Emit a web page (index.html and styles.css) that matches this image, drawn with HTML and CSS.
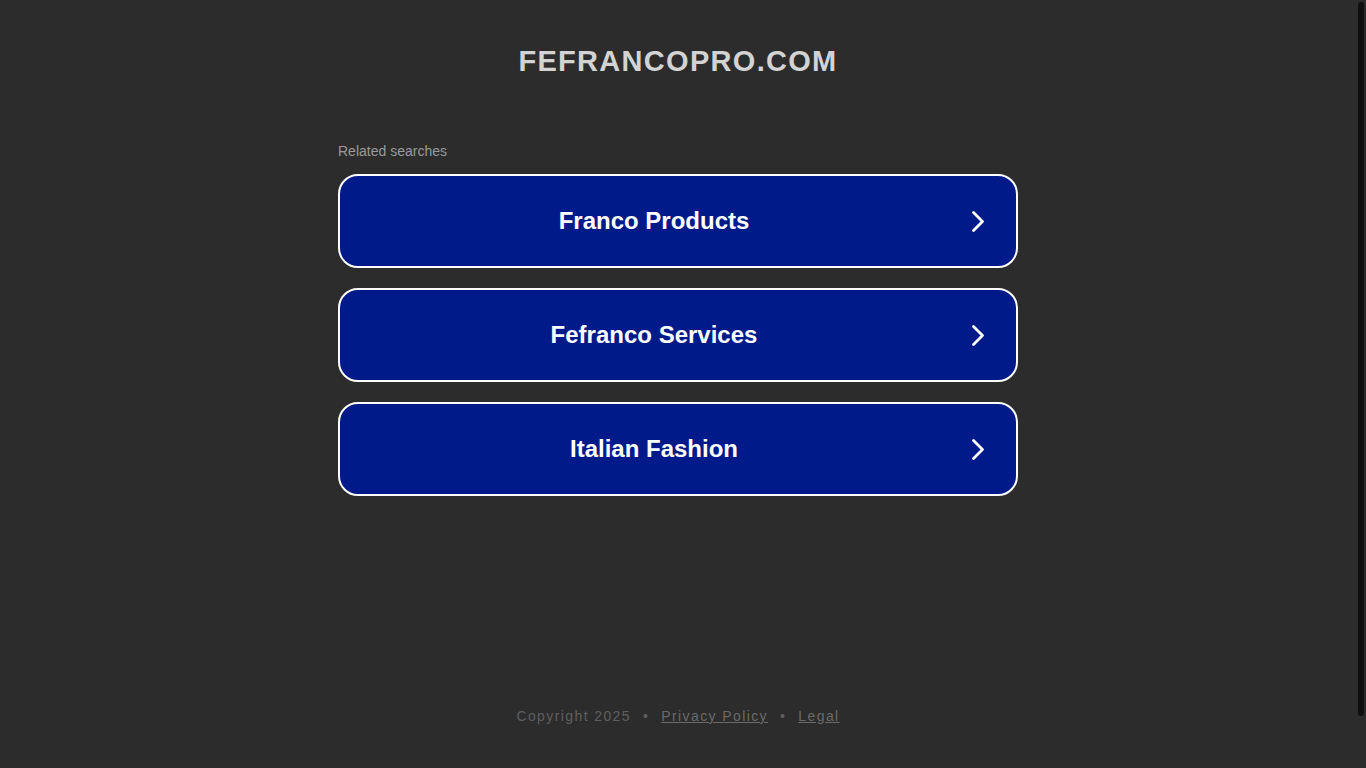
FILE: index.html
```html
<!DOCTYPE html>
<html lang="en">
<head>
<meta charset="utf-8">
<title>fefrancopro.com</title>
<link rel="stylesheet" href="styles.css">
</head>
<body>
<div class="page">
  <header class="header">
    <h1 class="domain">FEFRANCOPRO.COM</h1>
  </header>
  <main class="content">
    <div class="related">Related searches</div>
    <a class="result" href="#"><span class="label">Franco Products</span><span class="chev"><svg width="20" height="24" viewBox="0 0 20 24"><path d="M5.5 2.5 L14.5 11.5 L5.5 20.5" fill="none" stroke="#fff" stroke-width="2.8" stroke-linecap="round" stroke-linejoin="round"/></svg></span></a>
    <a class="result" href="#"><span class="label">Fefranco Services</span><span class="chev"><svg width="20" height="24" viewBox="0 0 20 24"><path d="M5.5 2.5 L14.5 11.5 L5.5 20.5" fill="none" stroke="#fff" stroke-width="2.8" stroke-linecap="round" stroke-linejoin="round"/></svg></span></a>
    <a class="result" href="#"><span class="label">Italian Fashion</span><span class="chev"><svg width="20" height="24" viewBox="0 0 20 24"><path d="M5.5 2.5 L14.5 11.5 L5.5 20.5" fill="none" stroke="#fff" stroke-width="2.8" stroke-linecap="round" stroke-linejoin="round"/></svg></span></a>
  </main>
  <footer class="footer">
    <span>Copyright 2025</span><span class="dot">•</span><a href="#">Privacy Policy</a><span class="dot">•</span><a href="#">Legal</a>
  </footer>
</div>
<div class="scrolltrack"><div class="scrollthumb"></div></div>
</body>
</html>
```

FILE: styles.css
```css
html, body {
  margin: 0;
  padding: 0;
  background: #2c2c2c;
  height: 100%;
  overflow: hidden;
}
body {
  font-family: "Liberation Sans", Arial, sans-serif;
  display: flex;
}
.page {
  width: 1356px;
  height: 768px;
  flex: none;
  display: flex;
  flex-direction: column;
  align-items: center;
}
.header {
  padding-top: 43px;
  height: 97px;
  box-sizing: border-box;
}
.domain {
  margin: 0;
  font-size: 29px;
  line-height: 36px;
  font-weight: bold;
  color: #d3d3d3;
  letter-spacing: 1.3px;
}
.content {
  width: 680px;
  display: flex;
  flex-direction: column;
  gap: 20px;
  padding-top: 45px;
}
.related {
  font-size: 14px;
  line-height: 18px;
  color: #9b9b9b;
  margin-bottom: -6px;
}
.result {
  height: 94px;
  box-sizing: border-box;
  border: 2px solid #ffffff;
  border-radius: 20px;
  background: #011a8a;
  display: flex;
  align-items: center;
  text-decoration: none;
  color: #ffffff;
}
.label {
  flex: 1;
  text-align: center;
  font-size: 24px;
  font-weight: bold;
}
.chev {
  width: 48px;
  display: flex;
  align-items: center;
  padding-top: 1px;
}
.footer {
  margin-top: auto;
  margin-bottom: 44px;
  font-size: 14px;
  letter-spacing: 1.4px;
  color: #5f5f5f;
  display: flex;
  align-items: center;
}
.footer a {
  color: #6a6a6a;
  text-decoration: underline;
}
.dot {
  margin: 0 12px;
}
.scrolltrack {
  flex: none;
  width: 10px;
  height: 768px;
  background: #2c2c2c;
  position: relative;
}
.scrollthumb {
  position: absolute;
  top: 2px;
  left: 2px;
  width: 6px;
  height: 714px;
  background: #0f0f0f;
  border-radius: 3px;
}
```
